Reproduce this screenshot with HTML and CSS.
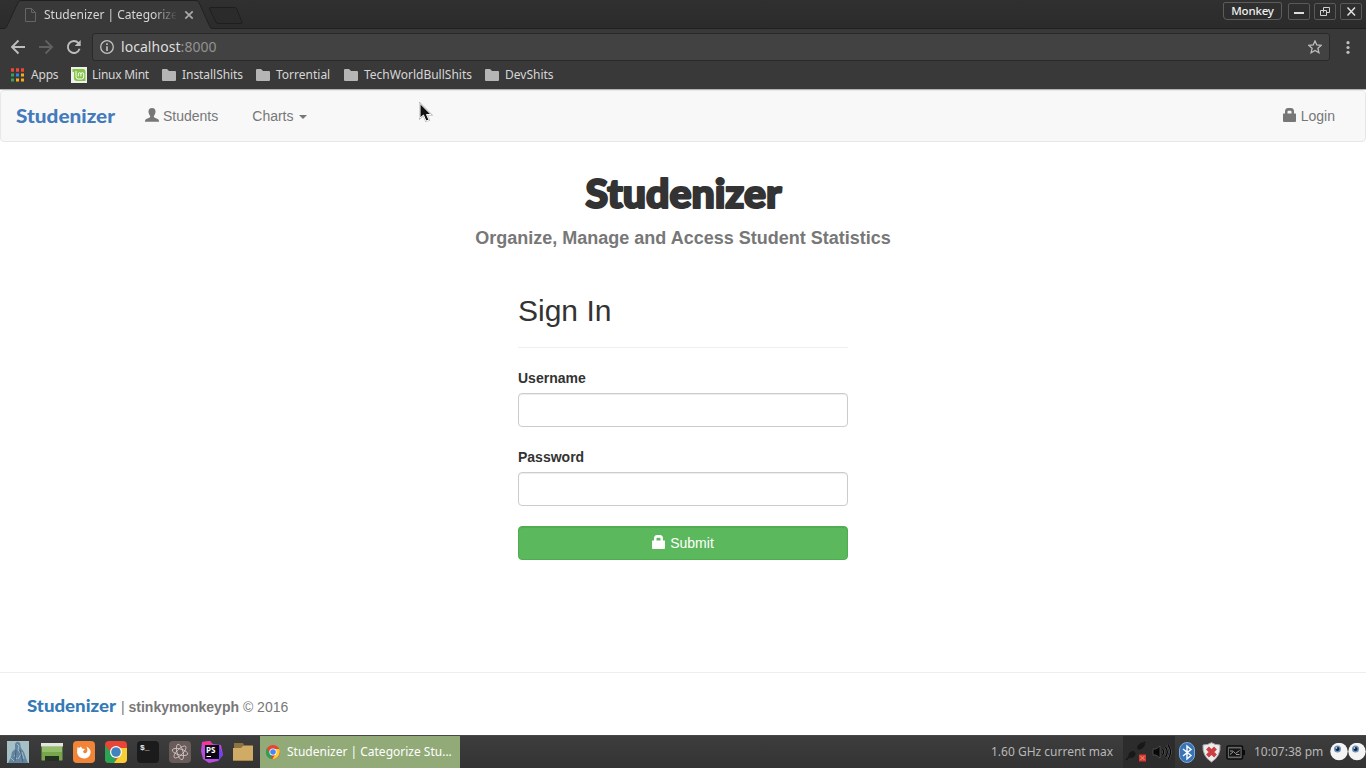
FILE: index.html
```html
<!DOCTYPE html>
<html lang="en">
<head>
<meta charset="utf-8">
<title>Studenizer | Categorize Students</title>
<link rel="stylesheet" href="styles.css">
</head>
<body>
<div class="desktop">
  <header class="browser">
    <div class="titlebar">
      <svg class="tab-shape" width="250" height="29" viewBox="0 0 250 29"><path d="M0 28.5H5L18.5 2Q19.500 .5 21 .5H196Q198 .5 199 2L211 28.500H250V29H0Z" fill="#393939"/><path d="M0 28.500H4Q6 28.500 7 26L18 2.500Q19 .5 21 .5H196Q198 .5 199 2.500L209.500 26Q210.500 28.500 213 28.500H250" fill="none" stroke="#202020"/><path d="M211 7.500H234.500Q236 7.500 236.500 8.500L242 22Q242.500 23.500 241 23.500H218Q216.500 23.500 216 22L209.500 9Q209 7.500 211 7.500Z" fill="#2b2b2b" stroke="#1e1e1e"/></svg>
      <div class="tab">
        <svg width="11" height="14" viewBox="0 0 11 14" fill="none" stroke="#656565"><path d="M.5 .5H6.500L10.500 4.500V13.500H.5ZM6.500 .5V4.500H10.500"/></svg>
        <span class="tab-title">Studenizer | Categorize</span>
        <svg width="10" height="10" viewBox="0 0 10 10" stroke="#a9a9a9" stroke-width="1.700"><path d="M1.300 1.300L8.700 8.700M8.700 1.300L1.300 8.700"/></svg>
      </div>
      <div class="window-buttons">
        <span class="profile">Monkey</span>
        <span class="win"><svg width="20" height="15" viewBox="0 0 20 15"><path d="M5 9H15" stroke="#ddd" stroke-width="2"/></svg></span>
        <span class="win"><svg width="20" height="15" viewBox="0 0 20 15" fill="none" stroke="#d0d0d0"><path d="M8.500 8.500V3.500H14.500V8.500H11.500M5.500 6.500H11.500V11.500H5.500Z"/></svg></span>
        <span class="win"><svg width="20" height="15" viewBox="0 0 20 15"><path d="M6.500 3.500L14 11.500M14 3.500L6.500 11.500" stroke="#e0e0e0" stroke-width="1.500"/></svg></span>
      </div>
    </div>
    <div class="toolbar">
      <svg width="80" height="18" viewBox="0 0 80 18" fill="none" stroke-width="1.900"><path d="M15 9H2M8.500 2.500L2 9L8.500 15.500" stroke="#bdbdbd"/><path d="M29 9H42M35.500 2.500L42 9L35.500 15.500" stroke="#606060"/><path d="M68.500 5.100A6 6 0 1 0 69.600 10.800" stroke="#bdbdbd"/><path d="M70.700 2V8H64.700Z" fill="#bdbdbd"/></svg>
      <div class="address">
        <svg width="14" height="14" viewBox="0 0 14 14"><circle cx="7" cy="7" r="6.300" fill="none" stroke="#c4c4c4" stroke-width="1.300"/><path d="M7 3.200V5M7 6.200V11" stroke="#c4c4c4" stroke-width="1.600"/></svg>
        <span class="url">localhost<span class="port">:8000</span></span>
        <svg width="14" height="14" viewBox="0 0 14 14"><path d="M7 1L8.800 5L13.200 5.400L9.900 8.300L10.900 12.700L7 10.400L3.100 12.700L4.100 8.300L.8 5.400L5.200 5Z" fill="none" stroke="#bebebe" stroke-width="1.300"/></svg>
      </div>
      <svg class="more" width="4" height="13" viewBox="0 0 4 13" fill="#c0c0c0"><circle cx="2" cy="1.700" r="1.600"/><circle cx="2" cy="6.500" r="1.600"/><circle cx="2" cy="11.300" r="1.600"/></svg>
    </div>
    <nav class="bookmarks">
      <span class="bm bm-apps"><svg width="14" height="14" viewBox="0 0 14 14"><path d="M0 2H13" stroke="#f04437" stroke-width="3.500" stroke-dasharray="3 2"/><path d="M0 7H3M0 12H3" stroke="#35a35b" stroke-width="3"/><path d="M5 7H8" stroke="#2e83ee" stroke-width="3"/><path d="M10 7H13M5 12H8M10 12H13" stroke="#f8ad18" stroke-width="3"/></svg>Apps</span>
      <span class="bm bm-mint"><svg width="16" height="16" viewBox="0 0 16 16"><path d="M0 0H16V16H0Z" fill="#f1eeee"/><path d="M1.500 2H12Q14.500 2 14.500 5V14H6Q3 14 3 11V5H1.500Z" fill="#84c447"/><path d="M5 4V9.500Q5 12 7 12H10.500Q12.700 12 12.700 10V7.200Q12.700 5.700 11.200 5.700Q9.900 5.700 9.900 7V9.500M9.900 7Q9.900 5.700 8.600 5.700Q7.300 5.700 7.300 7V9.500" fill="none" stroke="#fff" stroke-width="1"/></svg>Linux Mint</span>
      <span class="bm bm-install"><svg width="14" height="12" viewBox="0 0 14 12"><path d="M1 0H5L7 2H13Q14 2 14 3V11Q14 12 13 12H1Q0 12 0 11V1Q0 0 1 0Z" fill="#b5b5b5"/></svg>InstallShits</span>
      <span class="bm bm-torr"><svg width="14" height="12" viewBox="0 0 14 12"><path d="M1 0H5L7 2H13Q14 2 14 3V11Q14 12 13 12H1Q0 12 0 11V1Q0 0 1 0Z" fill="#b5b5b5"/></svg>Torrential</span>
      <span class="bm bm-tech"><svg width="14" height="12" viewBox="0 0 14 12"><path d="M1 0H5L7 2H13Q14 2 14 3V11Q14 12 13 12H1Q0 12 0 11V1Q0 0 1 0Z" fill="#b5b5b5"/></svg>TechWorldBullShits</span>
      <span class="bm"><svg width="14" height="12" viewBox="0 0 14 12"><path d="M1 0H5L7 2H13Q14 2 14 3V11Q14 12 13 12H1Q0 12 0 11V1Q0 0 1 0Z" fill="#b5b5b5"/></svg>DevShits</span>
    </nav>
  </header>

  <main class="page">
    <nav class="navbar">
      <svg class="brand" width="100" height="24"><text x="0" y="19" textLength="99" lengthAdjust="spacingAndGlyphs">Studenizer</text></svg>
      <a class="nav-link students"><svg width="14" height="14" viewBox="0 0 14 14"><path d="M7 0C9.400 0 10.700 1.500 10.500 4C10.300 6 9.600 7 8.900 7.800V9.300L12.600 11Q14 11.600 14 13V13.800H0V13Q0 11.600 1.400 11L5.100 9.300V7.800C4.400 7 3.700 6 3.500 4C3.300 1.500 4.600 0 7 0Z" fill="currentColor"/></svg>Students</a>
      <a class="nav-link charts">Charts<span class="caret"></span></a>
      <a class="nav-link login"><svg width="13" height="14" viewBox="0 0 13 14"><path d="M2 5.500V3.500Q2 0 5 0H8Q11 0 11 3.500V5.500H12.500Q13 5.500 13 6V13Q13 14 12 14H1Q0 14 0 13V6Q0 5.500 .5 5.500ZM4.500 5.500H8.500V3.800Q8.500 2.800 7.500 2.800H5.500Q4.500 2.800 4.500 3.800Z" fill="currentColor" fill-rule="evenodd"/></svg>Login</a>
    </nav>
    <svg class="cursor" width="14" height="22" viewBox="0 0 14 22"><path d="M1 1.500V16L4.500 13L7 19L10 18L7.500 12.500H12Z" fill="#111" stroke="#aaa" stroke-width="1.800"/><path d="M1 1.500V16L4.500 13L7 19L10 18L7.500 12.500H12Z" fill="#111" stroke="#fff" stroke-width="1"/></svg>
    <section class="hero">
      <svg class="hero-logo" width="200" height="40"><text x="2.500" y="34" textLength="196" lengthAdjust="spacingAndGlyphs">Studenizer</text></svg>
      <p class="tagline">Organize, Manage and Access Student Statistics</p>
    </section>
    <form class="signin">
      <h2>Sign In</h2>
      <label for="user">Username</label>
      <input id="user" type="text">
      <label for="pass">Password</label>
      <input id="pass" type="password">
      <button type="button"><svg width="13" height="14" viewBox="0 0 13 14"><path d="M2 5.500V3.500Q2 0 5 0H8Q11 0 11 3.500V5.500H12.500Q13 5.500 13 6V13Q13 14 12 14H1Q0 14 0 13V6Q0 5.500 .5 5.500ZM4.500 5.500H8.500V3.800Q8.500 2.800 7.500 2.800H5.500Q4.500 2.800 4.500 3.800Z" fill="currentColor" fill-rule="evenodd"/></svg>Submit</button>
    </form>
    <footer class="footer">
      <svg class="foot-logo" width="90" height="20"><text x="0" y="15" textLength="89" lengthAdjust="spacingAndGlyphs">Studenizer</text></svg>
      <span>| <b>stinkymonkeyph</b> © 2016</span>
    </footer>
  </main>

  <div class="taskbar">
    <div class="launchers">
      <svg class="first" width="22" height="22" viewBox="0 0 22 22"><path d="M0 0H22V22H0Z" fill="#a5c1c6"/><path d="M1 22L4 16L5 11L8 8L8 3Q10-1 13 2L14 7L17 11L19 17L21 22Z" fill="#6485a0"/><path d="M10 3L12 5L11 9L14 13L11 18M7 14L10 18M15 11L17 18M4 17L7 20" fill="none" stroke="#a2bac9"/><path d="M9 9L8 20M13 9L16 21" stroke="#46647f"/></svg>
      <svg width="22" height="18" viewBox="0 0 22 18"><path d="M.5 1H21.500V17.500H.5Z" fill="#78a64c"/><path d="M1 4H21V9H1Z" fill="#94bd69"/><path d="M0 0H22V3.500H0Z" fill="#e4e4e0"/><path d="M4 13H18V18H4Z" fill="#263020"/></svg>
      <svg width="22" height="22" viewBox="0 0 22 22"><rect width="22" height="22" rx="4" fill="#f18436"/><path d="M4.500 6L6 7L8 5.500L9 7.500L12 8L10 10.500Q10.500 13 13 12Q15.500 10.500 13.500 5.500Q18.500 8 17.500 12.500Q16 17.500 11 17.500Q5 17 4 11.500Z" fill="#fff"/></svg>
      <svg width="22" height="22" viewBox="0 0 22 22"><rect width="22" height="22" rx="4" fill="#e94435"/><path d="M0 4L8 14L11 15L10 22H4Q0 22 0 18Z" fill="#2ba456"/><path d="M12 7H22V18Q22 22 18 22H9L15 14Z" fill="#f7cf35"/><circle cx="11" cy="11" r="6" fill="#fff"/><circle cx="11" cy="11" r="4.800" fill="#4383bd"/></svg>
      <svg width="22" height="22" viewBox="0 0 22 22"><rect width="22" height="22" rx="4" fill="#1b1b1b"/><text class="prompt" x="3" y="9">$_</text></svg>
      <svg width="22" height="22" viewBox="0 0 22 22"><rect width="22" height="22" rx="4" fill="#6a5b5b"/><g fill="none" stroke="#d3cbc5" stroke-width=".8"><ellipse cx="11" cy="11" rx="8" ry="3" transform="rotate(15 11 11)"/><ellipse cx="11" cy="11" rx="8" ry="3" transform="rotate(75 11 11)"/><ellipse cx="11" cy="11" rx="8" ry="3" transform="rotate(135 11 11)"/></g></svg>
      <svg width="22" height="22" viewBox="0 0 22 22"><path d="M1 1L9 0L12 3L20 4L22 14L17 20L8 22L2 18L0 10Z" fill="#b94be0"/><path d="M1 1L9 0L12 5L4 8Z" fill="#f53597"/><path d="M18 4L22 14L17 20Z" fill="#7140ef"/><path d="M4 4H18V18H4Z" fill="#0b0712"/><text class="ps" x="5" y="11.500">PS</text><path d="M5.500 15.500H10" stroke="#fff"/></svg>
      <svg width="21" height="19" viewBox="0 0 21 19"><path d="M1 0H10L11 2H20V10H1Z" fill="#8c733f"/><path d="M0 5H8L10 3H20V18H0Z" fill="#cfab65"/><path d="M0 17.500H20" stroke="#ad843f"/></svg>
    </div>
    <div class="task"><svg width="14" height="14" viewBox="0 0 14 14"><circle cx="7" cy="7" r="7" fill="#e94335"/><path d="M.8 3.500L5 10L6 14Q0 13 0 7Q0 5 .8 3.500Z" fill="#25a454"/><path d="M7 4H13.300Q15 9 11 12.500Q9 14 6.500 14L10 8Z" fill="#fccc33"/><circle cx="7" cy="7" r="3.600" fill="#fff"/><circle cx="7" cy="7" r="2.800" fill="#4688f1"/></svg>Studenizer | Categorize Stu...</div>
    <div class="cpu">1.60 GHz current max</div>
    <div class="tray-dark">
      <svg width="24" height="22" viewBox="0 0 24 22"><path d="M1 19L5 15M14 7L20 1" stroke="#171717" stroke-width="1.500"/><ellipse cx="7" cy="13.500" rx="3.800" ry="3" transform="rotate(-40 7 13.500)" fill="#181818"/><ellipse cx="16" cy="5" rx="4.500" ry="2.700" transform="rotate(-40 16 5)" fill="#181818"/><path d="M14 13.500H21V20.500H14Z" fill="#d83b30"/><path d="M15.500 15L19.500 19M19.500 15L15.500 19" stroke="#f59082"/></svg>
      <svg width="20" height="18" viewBox="0 0 20 18"><path d="M1 6H4L8 3V15L4 12H1Z" fill="#080808" stroke="#666" stroke-width=".6"/><path d="M10.500 6Q12.500 9 10.500 12M13.500 4Q17 9 13.500 14M16 1.500Q21 9 16 16.500" fill="none" stroke="#777" stroke-width="2.200"/><path d="M10.500 6Q12.500 9 10.500 12M13.500 4Q17 9 13.500 14M16 1.500Q21 9 16 16.500" fill="none" stroke="#080808" stroke-width="1.500"/></svg>
    </div>
    <svg class="bluetooth" width="16" height="21" viewBox="0 0 16 21"><rect x=".5" y=".5" width="15" height="20" rx="7.500" fill="#3974b7" stroke="#7cabdc"/><path d="M4 7L12 13.500L8 17V4L12 7.500L4 14" fill="none" stroke="#fff" stroke-width="1.400"/></svg>
    <svg class="shield" width="19" height="21" viewBox="0 0 19 21"><path d="M9.500 .7Q13 3 18 3Q19 14 9.500 20Q0 14 1 3Q6 3 9.500 .7Z" fill="#ededed" stroke="#aaa"/><path d="M5.500 6L13.500 14M13.500 6L5.500 14" stroke="#cc3e41" stroke-width="4"/></svg>
    <svg class="battery" width="19" height="15" viewBox="0 0 19 15"><rect x="1" y="1" width="15.500" height="13" rx="1.500" fill="#666" stroke="#0a0a0a" stroke-width="1.600"/><path d="M17 5H19V10H17Z" fill="#0a0a0a"/><rect x="3" y="3.500" width="11.500" height="8" fill="#151515"/><path d="M4 6H7M4 9.500L7.500 6.500L9.500 8.500L13.500 5.500M10 9.500H13.500" stroke="#999" fill="none"/></svg>
    <span class="clock">10:07:38 pm</span>
    <svg class="eyes" width="36" height="19" viewBox="0 0 36 19"><circle cx="9" cy="8.500" r="8.700" fill="#f4f4f4"/><circle cx="27" cy="8.500" r="8.700" fill="#f4f4f4"/><circle cx="7.500" cy="6" r="3.500" fill="#6991bd"/><circle cx="25.500" cy="6" r="3.500" fill="#6991bd"/><circle cx="7.500" cy="6" r="2" fill="#10233d"/><circle cx="25.500" cy="6" r="2" fill="#10233d"/><circle cx="6.500" cy="5" r=".8" fill="#fff"/><circle cx="24.500" cy="5" r=".8" fill="#fff"/></svg>
  </div>
</div>
</body>
</html>
```
FILE: styles.css
```css
* { box-sizing: border-box; }
body { margin: 0; overflow: hidden; background: #fff; }
svg { display: block; flex: none; }
.desktop { width: 1366px; height: 768px; display: flex; flex-direction: column; font: 14px/20px "Liberation Sans", sans-serif; color: #333; }

/* Browser chrome */
.browser { height: 89px; flex: none; background: #393939; color: #d6d6d6; font: 12px/16px "Noto Sans", sans-serif; }
.titlebar { position: relative; height: 29px; display: flex; justify-content: space-between; background: linear-gradient(#303030, #2b2b2b); border-bottom: 1px solid #202020; }
.tab-shape { position: absolute; left: 0; top: 0; }
.tab { position: relative; display: flex; align-items: center; padding: 2px 0 0 25px; }
.tab-title { width: 132px; margin: 0 8px; overflow: hidden; white-space: nowrap; -webkit-mask-image: linear-gradient(90deg, #000 110px, transparent 134px); mask-image: linear-gradient(90deg, #000 110px, transparent 134px); }
.window-buttons { display: flex; gap: 4px; padding: 2px 4px 0 0; }
.profile { width: 59px; height: 18px; margin-right: 2px; border: 1px solid #5d5d5d; border-radius: 2px 2px 4px 4px; text-align: center; font-weight: 500; font-size: 11.500px; letter-spacing: -.2px; color: #eee; }
.win { width: 22px; height: 17px; margin-top: 1px; border: 1px solid #595959; border-radius: 2px; }
.toolbar { height: 32px; display: flex; align-items: flex-start; padding: 4px 15px 0 10px; }
.toolbar > svg:first-child { margin-top: 5px; }
.address { width: 1238px; height: 28px; margin-left: 2px; display: flex; align-items: center; padding: 0 7px; background: #424242; border: 1px solid #292929; border-radius: 3px; }
.url { flex: 1; margin-left: 7px; font-size: 14px; letter-spacing: .05px; color: #dedede; }
.port { color: #929292; }
.more { margin: 8px 0 0 16px; }
.bookmarks { height: 28px; display: flex; align-items: center; padding: 0 0 0 11px; }
.bm { display: flex; align-items: center; gap: 6px; white-space: nowrap; }
.bm-apps { width: 60px; letter-spacing: -.2px; }
.bm-mint { width: 91px; gap: 5px; letter-spacing: -.25px; }
.bm-install { width: 94px; letter-spacing: -.05px; }
.bm-torr { width: 88px; }
.bm-tech { width: 141px; }

/* Web page */
.page { position: relative; height: 646px; flex: none; display: flex; flex-direction: column; border-top: 1px solid #b5b5b5; background: #fff; }
.navbar { height: 52px; flex: none; display: flex; align-items: center; padding: 0 30px 0 15px; background: #f8f8f8; border: 1px solid #e7e7e7; border-radius: 4px; color: #777; }
.brand, .hero-logo, .foot-logo { font-family: Lato, sans-serif; font-weight: 900; overflow: visible; }
.brand { font-size: 19px; fill: #447bbb; }
.nav-link { display: flex; align-items: center; gap: 4px; }
.nav-link svg { margin-top: -2px; }
.students { margin-left: 29px; }
.charts { margin-left: 34px; gap: 5px; }
.caret { border: 4px solid transparent; border-top-color: #777; border-bottom: 0; margin-top: 2px; }
.login { margin-left: auto; gap: 5px; }
.cursor { position: absolute; left: 419px; top: 12px; }
.hero { height: 130px; flex: none; display: flex; flex-direction: column; align-items: center; padding-top: 32px; }
.hero-logo { font-size: 40px; fill: #333; stroke: #333; stroke-width: 2.200px; stroke-linejoin: round; }
.tagline { margin: 14px 0 0; font: bold 18px/20px "Liberation Sans", sans-serif; color: #777; }
.signin { width: 330px; height: 310px; margin: 0 auto; display: flex; flex-direction: column; }
.signin h2 { height: 76px; margin: 0 0 20px; padding-top: 22px; border-bottom: 1px solid #eee; font: 30px/33px "Liberation Sans", sans-serif; }
.signin label { margin-bottom: 5px; font-weight: bold; }
.signin input { height: 34px; margin: 0 0 20px; padding: 6px 12px; border: 1px solid #ccc; border-radius: 4px; box-shadow: inset 0 1px 1px rgba(0,0,0,.075); background: #fff; }
.signin button { height: 34px; display: flex; align-items: center; justify-content: center; gap: 5px; padding: 0; background: #5cb85c; border: 1px solid #4cae4c; border-radius: 4px; box-shadow: inset 0 1px 1px rgba(0,0,0,.075); color: #fff; font: 14px/20px "Liberation Sans", sans-serif; }
.signin button svg { margin-top: -2px; }
.footer { height: 63px; margin-top: auto; display: flex; align-items: center; gap: 4px; padding: 6px 0 0 27px; border-top: 1px solid #eee; color: #777; }
.foot-logo { font-size: 17.500px; fill: #337ab7; }

/* Desktop panel */
.taskbar { height: 33px; flex: none; display: flex; align-items: center; background: linear-gradient(#3d3d3d, #333); border-top: 1px solid #484848; color: #b7b7b7; font: 12px/16px "Noto Sans", sans-serif; white-space: nowrap; }
.launchers { width: 260px; display: flex; align-items: center; gap: 10px; padding-left: 7px; }
.launchers .first { margin-right: 2px; }
.task { width: 200px; height: 32px; display: flex; align-items: center; gap: 7px; padding-left: 6px; background: #91aa77; color: #fff; }
.cpu { width: 132px; margin-left: 531px; }
.tray-dark { width: 52px; height: 32px; display: flex; align-items: center; gap: 3px; padding-left: 2px; background: #2c2c2c; }
.bluetooth { margin-left: 4px; }
.shield { margin-left: 7px; }
.battery { margin-left: 5px; }
.clock { width: 76px; margin-left: 9px; }
.prompt { font: bold 8px "Liberation Mono", monospace; fill: #eee; }
.ps { font: bold 8px "Noto Sans", sans-serif; fill: #fff; }
```
